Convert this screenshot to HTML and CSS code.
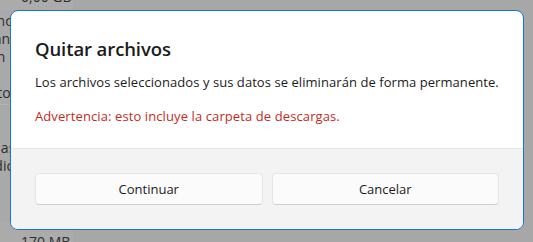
FILE: index.html
```html
<!DOCTYPE html>
<html lang="es">
<head>
<meta charset="utf-8">
<link rel="stylesheet" href="styles.css">
</head>
<body>
<div class="backdrop">
  <div class="side">
    <div class="side-top">
      <span class="size top-size">0,00 GB</span>
    </div>
    <div class="side-list">
      <div class="frag">Transferencias</div>
      <div class="frag">Ayer se hán</div>
      <div class="frag">Archivos in</div>
      <div class="frag">Separar</div>
      <div class="frag">Documentoc</div>
    </div>
    <div class="side-list second">
      <div class="frag">Imágenes as</div>
      <div class="frag">Vídeo, audio,</div>
      <div class="frag">Uso</div>
    </div>
    <div class="side-bottom">
      <span class="size">170 MB</span>
    </div>
  </div>
</div>

<div class="dialog">
  <div class="dialog-body">
    <h1 class="dialog-title">Quitar archivos</h1>
    <p class="dialog-text">Los archivos seleccionados y sus datos se eliminarán de forma permanente.</p>
    <p class="dialog-warning">Advertencia: esto incluye la carpeta de descargas.</p>
  </div>
  <div class="dialog-footer">
    <button class="btn">Continuar</button>
    <button class="btn">Cancelar</button>
  </div>
</div>
</body>
</html>
```

FILE: styles.css
```css
html, body {
  margin: 0;
  padding: 0;
  width: 533px;
  height: 242px;
  overflow: hidden;
}

body {
  background: #a7a7a7;
  font-family: "Open Sans", "Noto Sans", sans-serif;
  color: #1b1b1b;
  position: relative;
}

.backdrop {
  display: flex;
  height: 242px;
}

.side {
  width: 73px;
  display: flex;
  flex-direction: column;
  background: #a9a9a9;
  font-size: 14px;
  color: #2e2e2e;
}

.side-top {
  height: 10px;
  overflow: hidden;
  background: #ababab;
}

.size {
  display: block;
  padding-left: 21px;
  font-size: 14px;
  color: #2e2e2e;
  line-height: 18px;
}

.top-size {
  margin-top: -12px;
}

.side-list {
  display: flex;
  flex-direction: column;
  margin-left: -66px;
  padding-top: 2px;
  height: 92px;
  border-bottom: 1px solid #b2b2b2;
}

.side-list.second {
  height: 117px;
  padding-top: 34px;
  box-sizing: border-box;
  border-bottom: none;
}

.frag {
  line-height: 18px;
  white-space: nowrap;
  font-size: 14px;
}

.side-bottom {
  flex: 1;
  overflow: hidden;
  background: #ababab;
}

.side-bottom .size {
  padding-top: 11px;
}

.dialog {
  position: absolute;
  left: 10px;
  top: 10px;
  width: 514px;
  height: 220px;
  box-sizing: border-box;
  border: 1px solid #1477d2;
  border-radius: 8px;
  overflow: hidden;
  background: #ffffff;
  display: flex;
  flex-direction: column;
}

.dialog-body {
  flex: 1;
  padding: 24px 16px 0 24px;
}

.dialog-title {
  margin: 0 0 9px 0;
  font-size: 18.5px;
  line-height: 28px;
  font-weight: 600;
  color: #1b1b1b;
  letter-spacing: -0.1px;
}

.dialog-text {
  margin: 0;
  font-size: 13px;
  line-height: 20px;
  color: #1b1b1b;
  letter-spacing: 0.06px;
  white-space: nowrap;
}

.dialog-warning {
  margin: 14px 0 0 0;
  font-size: 13px;
  line-height: 20px;
  color: #c42b1c;
  letter-spacing: 0.1px;
  white-space: nowrap;
}

.dialog-footer {
  border-top: 1px solid #e5e5e5;
  background: #f3f3f3;
  padding: 24px;
  display: grid;
  grid-template-columns: 1fr 1fr;
  gap: 9px;
}

.btn {
  height: 32px;
  font-family: inherit;
  font-size: 13px;
  color: #1b1b1b;
  background: #fbfbfb;
  border: 1px solid #e5e5e5;
  border-bottom-color: #cfcfcf;
  border-radius: 4px;
  padding: 0;
}
```
